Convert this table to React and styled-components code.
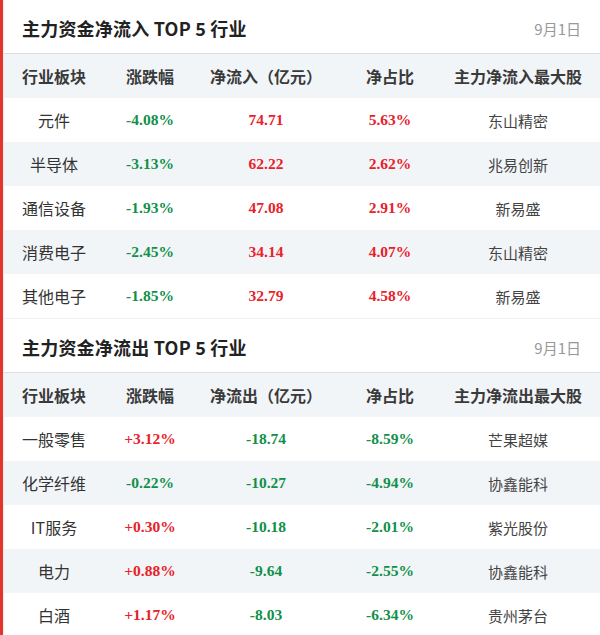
import React from "react";
import styled, { createGlobalStyle } from "styled-components";

const Global = createGlobalStyle`
  html, body { margin: 0; padding: 0; background: #fff; }
  body { font-family: "Noto Sans CJK SC", "Noto Sans", sans-serif; }
`;

const Page = styled.div`
  width: 600px;
  border-left: 3px solid #e5352a;
  box-sizing: border-box;
  background: #fff;
`;

const Section = styled.section`
  border-left: 1px solid #eef0f3;
  border-bottom: 1px solid #f2f2f2;
`;

const TitleBar = styled.div`
  display: flex;
  align-items: center;
  justify-content: space-between;
  box-sizing: border-box;
  height: 54px;
  padding: 3px 19px 0 18px;
  border-bottom: 1px solid #dcdde0;
`;

const Title = styled.h2`
  margin: 0;
  font-size: 18px;
  font-weight: 700;
  letter-spacing: 0.2px;
  color: #222;
  font-family: "Noto Sans CJK SC", sans-serif;
`;

const DateText = styled.span`
  font-size: 15px;
  color: #999;
`;

const Row = styled.div`
  display: grid;
  grid-template-columns: 100px 92px 140px 108px 148px;
  align-items: center;
  height: 44px;
  background: ${(p) => (p.$shade ? "#f2f5f8" : "#fff")};
`;

const HeadCell = styled.div`
  text-align: center;
  font-size: 16px;
  font-weight: 700;
  color: #3a3a3a;
`;

const NameCell = styled.div`
  text-align: center;
  font-size: 16px;
  color: #333;
`;

const NumCell = styled.div`
  text-align: center;
  font-family: "Liberation Serif", "Times New Roman", serif;
  font-weight: 700;
  font-size: 15.5px;
  color: ${(p) => (p.$up ? "#e8212a" : "#11904a")};
`;

const StockCell = styled.div`
  text-align: center;
  font-size: 15px;
  color: #444;
`;

const inflow = [
  ["元件", "-4.08%", "74.71", "5.63%", "东山精密"],
  ["半导体", "-3.13%", "62.22", "2.62%", "兆易创新"],
  ["通信设备", "-1.93%", "47.08", "2.91%", "新易盛"],
  ["消费电子", "-2.45%", "34.14", "4.07%", "东山精密"],
  ["其他电子", "-1.85%", "32.79", "4.58%", "新易盛"],
];

const outflow = [
  ["一般零售", "+3.12%", "-18.74", "-8.59%", "芒果超媒"],
  ["化学纤维", "-0.22%", "-10.27", "-4.94%", "协鑫能科"],
  ["IT服务", "+0.30%", "-10.18", "-2.01%", "紫光股份"],
  ["电力", "+0.88%", "-9.64", "-2.55%", "协鑫能科"],
  ["白酒", "+1.17%", "-8.03", "-6.34%", "贵州茅台"],
];

const isUp = (v) => !v.startsWith("-");

function Block({ title, flowLabel, topLabel, rows }) {
  return (
    <Section>
      <TitleBar>
        <Title>{title}</Title>
        <DateText>9月1日</DateText>
      </TitleBar>
      <Row $shade>
        <HeadCell>行业板块</HeadCell>
        <HeadCell>涨跌幅</HeadCell>
        <HeadCell>{flowLabel}</HeadCell>
        <HeadCell>净占比</HeadCell>
        <HeadCell>{topLabel}</HeadCell>
      </Row>
      {rows.map((r, i) => (
        <Row key={r[0]} $shade={i % 2 === 1}>
          <NameCell>{r[0]}</NameCell>
          <NumCell $up={isUp(r[1])}>{r[1]}</NumCell>
          <NumCell $up={isUp(r[2])}>{r[2]}</NumCell>
          <NumCell $up={isUp(r[3])}>{r[3]}</NumCell>
          <StockCell>{r[4]}</StockCell>
        </Row>
      ))}
    </Section>
  );
}

export default function App() {
  return (
    <>
      <Global />
      <Page>
        <Block
          title="主力资金净流入 TOP 5 行业"
          flowLabel="净流入（亿元）"
          topLabel="主力净流入最大股"
          rows={inflow}
        />
        <Block
          title="主力资金净流出 TOP 5 行业"
          flowLabel="净流出（亿元）"
          topLabel="主力净流出最大股"
          rows={outflow}
        />
      </Page>
    </>
  );
}
